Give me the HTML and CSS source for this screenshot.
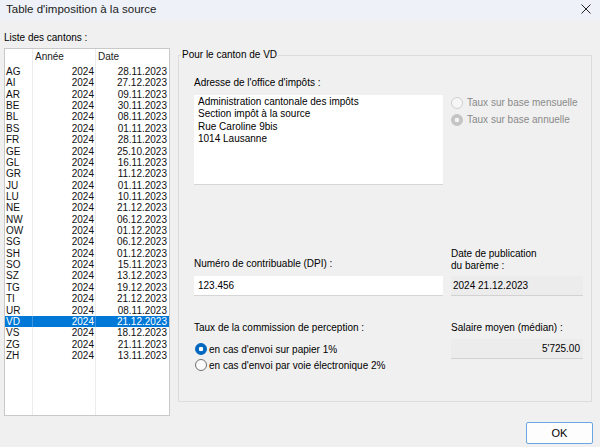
FILE: index.html
```html
<!DOCTYPE HTML>
<html>
  <head>
    <meta http-equiv="content-type" content="text/html; charset=utf-8">
    <title>Table d'imposition à la source</title>
    <link rel="stylesheet" href="styles.css">
  </head>
  <body>
    <div class="titleBar">
      <span>Table d'imposition à la source</span>
      <svg class="closeIcon" width="10" height="10" viewBox="0 0 10 10">
        <path d="M0.5 0.5 L9.5 9.5 M9.5 0.5 L0.5 9.5" stroke="#222" stroke-width="1" fill="none"/>
      </svg>
    </div>

    <div class="mainArea">
      <div class="leftColumn">
        <div class="caption">Liste des cantons :</div>
        <div class="listBox">
          <table class="cantonTable">
            <tr class="headRow"><td></td><td class="headCell">Année</td><td class="headCell">Date</td></tr>
            <tr><td>AG</td><td>2024</td><td>28.11.2023</td></tr>
            <tr><td>AI</td><td>2024</td><td>27.12.2023</td></tr>
            <tr><td>AR</td><td>2024</td><td>09.11.2023</td></tr>
            <tr><td>BE</td><td>2024</td><td>30.11.2023</td></tr>
            <tr><td>BL</td><td>2024</td><td>08.11.2023</td></tr>
            <tr><td>BS</td><td>2024</td><td>01.11.2023</td></tr>
            <tr><td>FR</td><td>2024</td><td>28.11.2023</td></tr>
            <tr><td>GE</td><td>2024</td><td>25.10.2023</td></tr>
            <tr><td>GL</td><td>2024</td><td>16.11.2023</td></tr>
            <tr><td>GR</td><td>2024</td><td>11.12.2023</td></tr>
            <tr><td>JU</td><td>2024</td><td>01.11.2023</td></tr>
            <tr><td>LU</td><td>2024</td><td>10.11.2023</td></tr>
            <tr><td>NE</td><td>2024</td><td>21.12.2023</td></tr>
            <tr><td>NW</td><td>2024</td><td>06.12.2023</td></tr>
            <tr><td>OW</td><td>2024</td><td>01.12.2023</td></tr>
            <tr><td>SG</td><td>2024</td><td>06.12.2023</td></tr>
            <tr><td>SH</td><td>2024</td><td>01.12.2023</td></tr>
            <tr><td>SO</td><td>2024</td><td>15.11.2023</td></tr>
            <tr><td>SZ</td><td>2024</td><td>13.12.2023</td></tr>
            <tr><td>TG</td><td>2024</td><td>19.12.2023</td></tr>
            <tr><td>TI</td><td>2024</td><td>21.12.2023</td></tr>
            <tr><td>UR</td><td>2024</td><td>08.11.2023</td></tr>
            <tr class="selectedRow"><td>VD</td><td>2024</td><td>21.12.2023</td></tr>
            <tr><td>VS</td><td>2024</td><td>18.12.2023</td></tr>
            <tr><td>ZG</td><td>2024</td><td>21.11.2023</td></tr>
            <tr><td>ZH</td><td>2024</td><td>13.11.2023</td></tr>
            <tr class="fillerRow"><td></td><td></td><td></td></tr>
          </table>
        </div>
      </div>

      <fieldset class="groupBox">
        <legend class="groupTitle">Pour le canton de VD</legend>
        <div class="groupContent">

          <div class="formRow addressRow">
            <div>
              <div class="fieldLabel">Adresse de l'office d'impôts :</div>
              <div class="addressBox">
                Administration cantonale des impôts<br>
                Section impôt à la source<br>
                Rue Caroline 9bis<br>
                1014 Lausanne
              </div>
            </div>
            <div class="baseRadios">
              <div class="radioLine disabled"><span class="radio"></span>Taux sur base mensuelle</div>
              <div class="radioLine disabled"><span class="radio checked"></span>Taux sur base annuelle</div>
            </div>
          </div>

          <div class="formRow dpiRow">
            <div>
              <div class="twoLineLabel">Numéro de contribuable (DPI) :</div>
              <div class="editBox">123.456</div>
            </div>
            <div>
              <div class="twoLineLabel">Date de publication<br>du barème :</div>
              <div class="readBox">2024 21.12.2023</div>
            </div>
          </div>

          <div class="formRow rateRow">
            <div>
              <div class="fieldLabel">Taux de la commission de perception :</div>
              <div class="rateRadios">
                <div class="radioLine"><span class="radio active"></span>en cas d'envoi sur papier 1%</div>
                <div class="radioLine"><span class="radio"></span>en cas d'envoi par voie électronique 2%</div>
              </div>
            </div>
            <div>
              <div class="fieldLabel">Salaire moyen (médian) :</div>
              <div class="readBox alignRight">5'725.00</div>
            </div>
          </div>

        </div>
      </fieldset>
    </div>

    <div class="buttonBar">
      <div class="okButton">OK</div>
    </div>
  </body>
</html>
```

FILE: styles.css
```css
body {
  margin: 0;
  width: 600px;
  height: 447px;
  overflow: hidden;
  background-color: #f0f0f0;
  color: #000;
  font-family: "Liberation Sans", Arial, sans-serif;
  font-size: 10px;
}

.titleBar {
  height: 18px;
  padding: 0 9px 2px 6px;
  display: flex;
  align-items: center;
  justify-content: space-between;
  background-color: #eef2f8;
  font-size: 11.5px;
  color: #1a1a1a;
}

.closeIcon {
  display: block;
}

.mainArea {
  display: grid;
  grid-template-columns: 166px 414px;
  column-gap: 8px;
  padding: 0 4px;
}

/* list of cantons */
.leftColumn {
  padding-top: 12px;
}

.caption {
  line-height: 12px;
  margin-bottom: 4px;
}

.listBox {
  height: 366px;
  border: 1px solid #c9c9c9;
  background-color: #fff;
}

.cantonTable {
  width: 100%;
  height: 100%;
  border-collapse: collapse;
}

.cantonTable td {
  padding: 0;
  height: 11.36px;
  line-height: 11.36px;
  white-space: nowrap;
  text-align: right;
  color: #111;
}

.cantonTable td:first-child {
  width: 26px;
  padding-left: 1px;
  text-align: left;
  border-right: 1px solid #ececec;
}

.cantonTable td:nth-child(2) {
  width: 59px;
  padding-right: 1px;
  border-right: 1px solid #ececec;
}

.cantonTable td:nth-child(3) {
  padding-right: 2px;
}

.cantonTable .headRow td {
  height: 17px;
  line-height: 16px;
  vertical-align: top;
}

.cantonTable .headCell {
  text-align: left;
  padding-left: 2px;
  color: #222;
}

.cantonTable .fillerRow td {
  height: auto;
}

.cantonTable .selectedRow td {
  background-color: #0078d7;
  color: #fff;
}

.cantonTable .selectedRow td:first-child {
  border-right-color: #3d96de;
}

.cantonTable .selectedRow td:nth-child(2) {
  border-right-color: #3d96de;
}

/* group box */
.groupBox {
  margin: 29px 0 0 0;
  padding: 0;
  height: 353px;
  box-sizing: border-box;
  border: 1px solid #dcdcdc;
  min-width: 0;
}

.groupTitle {
  margin-left: 2px;
  padding: 0 1px;
  line-height: 12px;
}

.groupContent {
  padding: 16px 8px 0 15px;
}

.formRow {
  display: grid;
  grid-template-columns: 249px 132px;
  column-gap: 8px;
}

.fieldLabel {
  line-height: 12px;
}

.addressBox {
  margin-top: 6px;
  height: 87px;
  padding: 1px 4px;
  line-height: 12.3px;
  background-color: #fff;
  border-bottom: 1px solid #d6d6d6;
}

.baseRadios {
  padding-top: 17px;
}

.radioLine {
  height: 17px;
  display: flex;
  align-items: center;
  white-space: nowrap;
}

.radio {
  width: 10px;
  height: 10px;
  margin-right: 4px;
  border: 1px solid #707070;
  border-radius: 50%;
  background-color: #fafafa;
  box-sizing: content-box;
  flex-shrink: 0;
}

.disabled {
  color: #8a8a8a;
}

.disabled .radio {
  border-color: #cfcfcf;
  background-color: #f6f6f6;
}

.disabled .radio.checked {
  border-color: #c4c4c4;
  background: radial-gradient(circle, #f4f4f4 0, #f4f4f4 2px, #c4c4c4 2.6px);
}

.radio.active {
  border-color: #0067c0;
  background: radial-gradient(circle, #fff 0, #fff 2px, #0067c0 2.6px);
}

.dpiRow {
  margin-top: 63px;
}

.twoLineLabel {
  height: 24px;
  line-height: 12px;
  display: flex;
  flex-direction: column;
  justify-content: flex-end;
}

.dpiRow div:first-child > .twoLineLabel {
  padding-bottom: 2px;
  height: 22px;
}

.editBox {
  margin-top: 4px;
  height: 19px;
  line-height: 19px;
  padding-left: 4px;
  background-color: #fff;
  border-bottom: 1px solid #d6d6d6;
}

.readBox {
  margin-top: 4px;
  height: 19px;
  line-height: 19px;
  padding: 0 3px 0 2px;
  background-color: #ececec;
  border-bottom: 1px solid #d2d2d2;
}

.alignRight {
  text-align: right;
}

.rateRow {
  margin-top: 26px;
}

.rateRow .readBox {
  margin-top: 5px;
}

.rateRadios {
  margin-top: 7px;
}

.rateRadios .radioLine {
  height: 16px;
}

.rateRadios .radio {
  margin-left: 1px;
  margin-right: 2px;
}

/* bottom buttons */
.buttonBar {
  display: flex;
  justify-content: flex-end;
  padding: 6px 7px 0 0;
}

.okButton {
  width: 65px;
  height: 20px;
  line-height: 20px;
  text-align: center;
  border: 1px solid #6aa6e3;
  border-radius: 2px;
  background-color: #fdfdfd;
  font-size: 11px;
}
```
